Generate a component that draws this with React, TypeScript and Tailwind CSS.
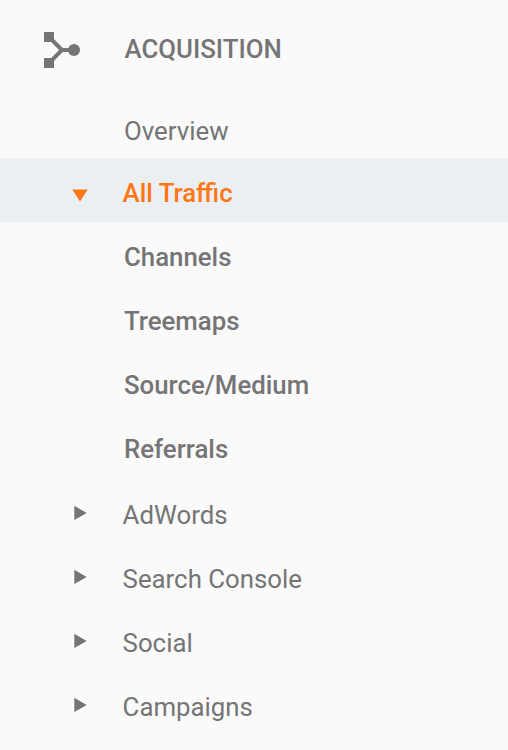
type Item = {
  label: string;
  kind: "open" | "child" | "closed";
};

const items: Item[] = [
  { label: "All Traffic", kind: "open" },
  { label: "Channels", kind: "child" },
  { label: "Treemaps", kind: "child" },
  { label: "Source/Medium", kind: "child" },
  { label: "Referrals", kind: "child" },
  { label: "AdWords", kind: "closed" },
  { label: "Search Console", kind: "closed" },
  { label: "Social", kind: "closed" },
  { label: "Campaigns", kind: "closed" },
];

const rowStyles = {
  open: "bg-[#ebeff2] text-[#ff7617] font-medium pt-[6px]",
  child: "font-medium pl-[124px] pt-[6px]",
  closed: "pt-[10px]",
};

const AcquisitionIcon = () => (
  <svg className="h-9 w-[37px]" viewBox="0 0 37 36" fill="#757575">
    <path d="M0 0h10v10H0zM0 26h10v10H0z" />
    <path d="M6 6l12 12L6 30M17 18h13" fill="none" stroke="#757575" strokeWidth="4" />
    <circle cx="30" cy="18" r="6" />
  </svg>
);

const Arrow = ({ open }: { open: boolean }) => (
  <span className="flex w-[122.6px] shrink-0 pl-[72px]">
    <svg className={open ? "mt-[6px]" : "-mt-[6px]"} width="16" height="16" fill="currentColor">
      <path d={open ? "M0.3 1.5h15.4L8 13.5z" : "M2.3 1.7L14.7 9 2.3 16z"} />
    </svg>
  </span>
);

const App = () => {
  return (
    <nav className="h-[750px] w-full overflow-hidden bg-[#fafafa] font-['Roboto',sans-serif] text-[25.8px] leading-8 text-[#757575]">
      <div className="flex h-[98px] items-center pl-[44px] pt-[2px]">
        <AcquisitionIcon />
        <h1 className="ml-[43.5px] pb-[2px] font-medium">ACQUISITION</h1>
      </div>
      <div className="flex h-[60px] items-center pl-[124px] pt-[6px]">Overview</div>
      <ul>
        {items.map((item) => (
          <li key={item.label} className={`flex h-16 items-center ${rowStyles[item.kind]}`}>
            {item.kind !== "child" && <Arrow open={item.kind === "open"} />}
            {item.label}
          </li>
        ))}
      </ul>
    </nav>
  );
};

export default App;
